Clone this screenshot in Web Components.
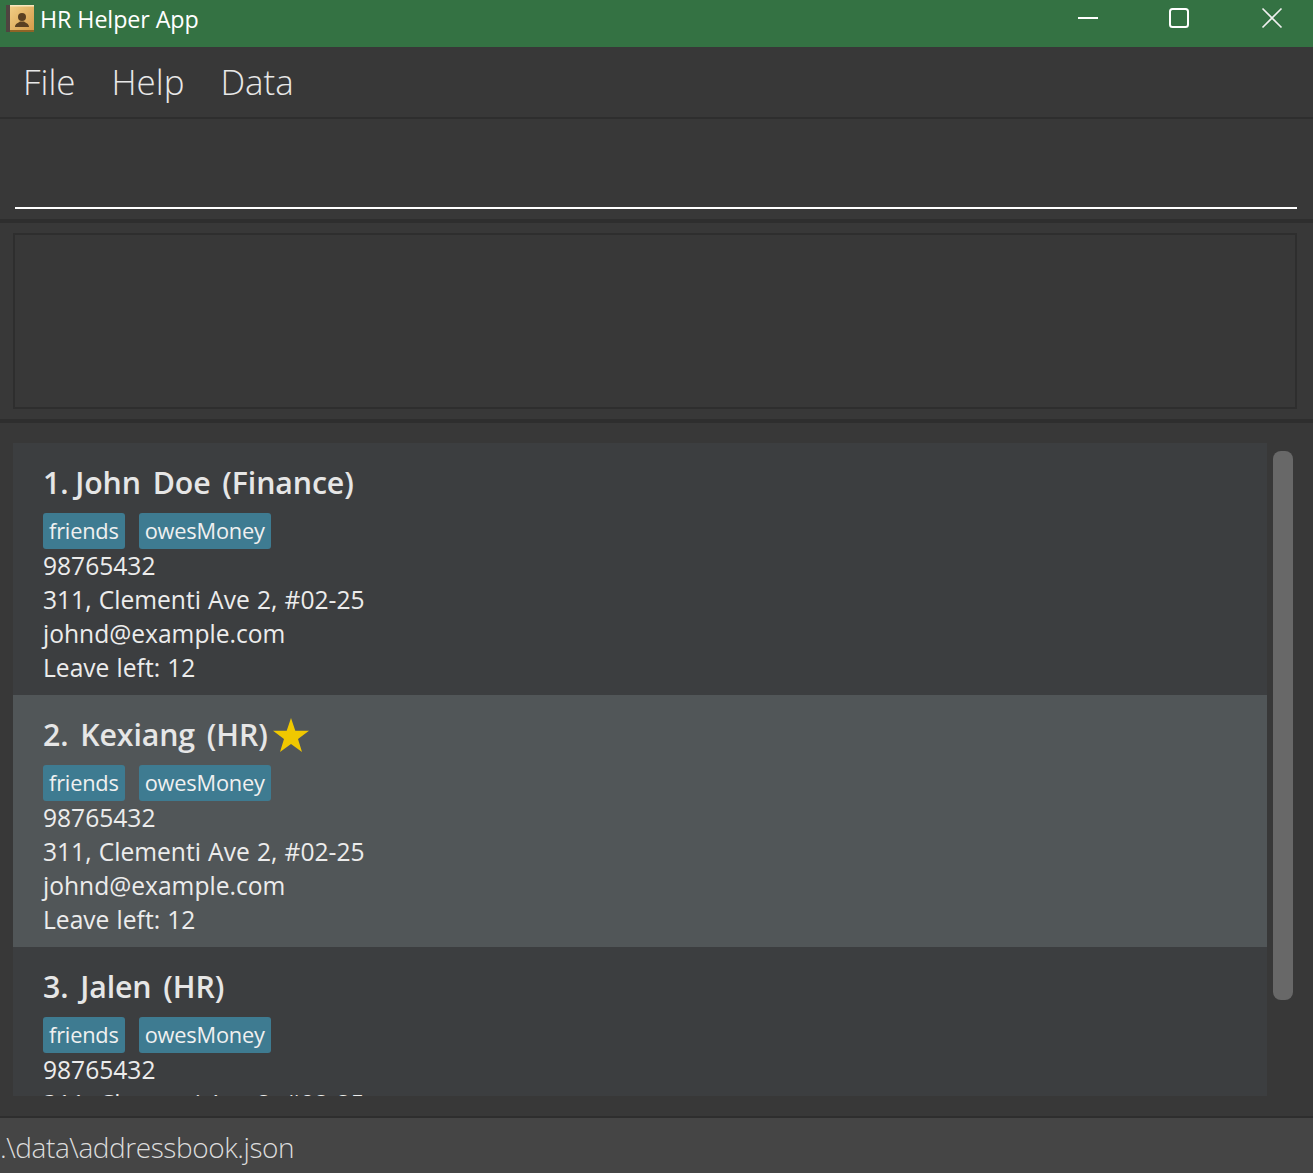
<!DOCTYPE html>
<html>
<head>
<meta charset="utf-8">
<title>HR Helper App</title>
<style>
  html, body { margin: 0; padding: 0; background: #383838; }
  body { width: 1313px; height: 1173px; overflow: hidden; font-family: "Open Sans", "Noto Sans", sans-serif; }
  hr-app { display: block; }
</style>
</head>
<body>
<hr-app></hr-app>

<script>
const FONT = '"Open Sans", "Noto Sans", sans-serif';

class TitleBar extends HTMLElement {
  connectedCallback() {
    this.attachShadow({ mode: "open" }).innerHTML = `
      <style>
        :host { display: flex; align-items: center; height: 47px; background: #347243; color: #fff; }
        .logo { width: 28px; height: 27px; margin: 0 6px 0 6px; flex: none; position: relative; top: -5px; }
        .name { font: 400 23.3px/1 ${FONT}; position: relative; top: -4px; letter-spacing: -0.1px; flex: 1; }
        .btn { flex: none; display: block; }
      </style>
      <svg class="logo" viewBox="0 0 28 27">
        <defs>
          <linearGradient id="cover" x1="0" y1="0" x2="1" y2="1">
            <stop offset="0" stop-color="#f2cf86"/>
            <stop offset="1" stop-color="#d39a48"/>
          </linearGradient>
        </defs>
        <rect x="0" y="0" width="6" height="27" fill="#4f4440"/>
        <rect x="4" y="0" width="24" height="27" rx="1" fill="url(#cover)"/>
        <rect x="4" y="0" width="24" height="1.5" fill="#f8e6bd"/>
        <rect x="4" y="25" width="24" height="2" fill="#8f6426"/>
        <circle cx="16" cy="12" r="4" fill="#5a4022"/>
        <path d="M9 22 C9 18.5 12.5 18 14 16.5 L18 16.5 C19.5 18 23 18.5 23 22 Z" fill="#5a4022"/>
      </svg>
      <span class="name">HR Helper App</span>
      <svg class="btn" width="253" height="47" viewBox="0 0 253 47">
        <path d="M18 18 H38" stroke="#fff" stroke-width="2" fill="none"/>
        <rect x="110" y="9" width="18" height="18" rx="2.5" stroke="#fff" stroke-width="2" fill="none"/>
        <path d="M202.5 8.5 L221.5 27.5 M221.5 8.5 L202.5 27.5" stroke="#f0f0f0" stroke-width="1.6" fill="none"/>
      </svg>`;
  }
}

class MenuBar extends HTMLElement {
  connectedCallback() {
    this.attachShadow({ mode: "open" }).innerHTML = `
      <style>
        :host { display: flex; gap: 36px; box-sizing: border-box; height: 72px; padding: 13px 0 0 23px;
          background: #383838; border-bottom: 2px solid #2e2e2e;
          font: 300 34.9px/44px ${FONT}; color: #e8e8e8; }
      </style>
      <span>File</span><span>Help</span><span>Data</span>`;
  }
}

class CommandBox extends HTMLElement {
  connectedCallback() {
    this.attachShadow({ mode: "open" }).innerHTML = `
      <style>
        :host { display: block; box-sizing: border-box; height: 104px; padding: 88px 16px 0 15px;
          background: #383838; border-bottom: 4px solid #2e2e2e; }
        div { height: 2px; background: #fff; }
      </style>
      <div></div>`;
  }
}

class ResultBox extends HTMLElement {
  connectedCallback() {
    this.attachShadow({ mode: "open" }).innerHTML = `
      <style>
        :host { display: block; box-sizing: border-box; height: 200px; padding: 10px 16px 10px 13px;
          background: #383838; border-bottom: 4px solid #2e2e2e; }
        div { box-sizing: border-box; height: 176px; border: 2px solid #2e2e2e; background: #383838; }
      </style>
      <div></div>`;
  }
}

class TagChip extends HTMLElement {
  connectedCallback() {
    this.attachShadow({ mode: "open" }).innerHTML = `
      <style>
        :host { display: block; height: 36px; padding: 0 6px; border-radius: 3px; background: #3e7b91;
          color: #f0f0f0; font: 400 21.8px/36px ${FONT}; letter-spacing: -0.2px; }
      </style>
      <slot></slot>`;
  }
}

class PersonCard extends HTMLElement {
  connectedCallback() {
    const shade = this.hasAttribute("selected") ? "#515658" : "#3c3e40";
    const star = this.hasAttribute("star") ? `
      <svg class="star" width="38" height="36" viewBox="0 0 38 36">
        <polygon fill="#f0c800" points="19,1 23.3,13.8 37,13.8 26,22 30,35 19,27 8,35 12,22 1,13.8 14.7,13.8"/>
      </svg>` : "";
    // the last card runs under the bottom of the list, only its first lines show
    const rest = this.hasAttribute("cut") ? "" : `
      <div class="line">johnd@example.com</div>
      <div class="line">Leave left: 12</div>`;
    // the "1" of the reference font is narrower than the other digits
    const num = this.getAttribute("num");
    const tight = num === "1." ? "word-spacing:-1px" : "";
    this.attachShadow({ mode: "open" }).innerHTML = `
      <style>
        :host { display: block; box-sizing: border-box; height: 252px; padding: 16px 0 0 30px;
          background: ${shade}; color: #ececec; }
        .head { display: flex; align-items: center; height: 48px; font: 600 30.3px/48px ${FONT}; color: #e6e6e6;
          letter-spacing: -0.1px; word-spacing: 4px; white-space: pre; }
        .star { margin-left: 4px; }
        .tags { display: flex; gap: 14px; margin: 6px 0 0; }
        .line { font: 400 24.6px/34px ${FONT}; word-spacing: 0.8px; white-space: nowrap; }
      </style>
      <div class="head"><span style="${tight}">${num} </span><span>${this.getAttribute("name")}</span>${star}</div>
      <div class="tags"><tag-chip>friends</tag-chip><tag-chip>owesMoney</tag-chip></div>
      <div class="line">98765432</div>
      <div class="line">311, Clementi Ave 2, #02-25</div>${rest}`;
  }
}

class PersonList extends HTMLElement {
  connectedCallback() {
    this.attachShadow({ mode: "open" }).innerHTML = `
      <style>
        :host { display: flex; box-sizing: border-box; height: 693px; padding: 20px 0 20px 13px; background: #383838; }
        .cards { width: 1254px; flex: none; overflow: hidden; }
        .thumb { width: 20px; height: 549px; margin: 8px 0 0 6px; border-radius: 8px; background: #686868; flex: none; }
      </style>
      <div class="cards"><slot></slot></div>
      <div class="thumb"></div>`;
  }
}

class StatusBar extends HTMLElement {
  connectedCallback() {
    this.attachShadow({ mode: "open" }).innerHTML = `
      <style>
        :host { display: block; box-sizing: border-box; height: 57px; background: #454545;
          border-top: 2px solid #2e2e2e; color: #dcdcdc; font: 300 28px/58px ${FONT}; letter-spacing: -0.43px; white-space: nowrap; }
      </style>
      <slot></slot>`;
  }
}

class HrApp extends HTMLElement {
  connectedCallback() {
    this.attachShadow({ mode: "open" }).innerHTML = `
      <style>:host { display: block; width: 1313px; height: 1173px; }</style>
      <title-bar></title-bar>
      <menu-bar></menu-bar>
      <command-box></command-box>
      <result-box></result-box>
      <person-list>
        <person-card num="1." name="John Doe (Finance)"></person-card>
        <person-card num="2." name="Kexiang (HR)" selected star></person-card>
        <person-card num="3." name="Jalen (HR)" cut></person-card>
      </person-list>
      <status-bar>.\\data\\addressbook.json</status-bar>`;
  }
}

customElements.define("title-bar", TitleBar);
customElements.define("menu-bar", MenuBar);
customElements.define("command-box", CommandBox);
customElements.define("result-box", ResultBox);
customElements.define("tag-chip", TagChip);
customElements.define("person-card", PersonCard);
customElements.define("person-list", PersonList);
customElements.define("status-bar", StatusBar);
customElements.define("hr-app", HrApp);
</script>
</body>
</html>
